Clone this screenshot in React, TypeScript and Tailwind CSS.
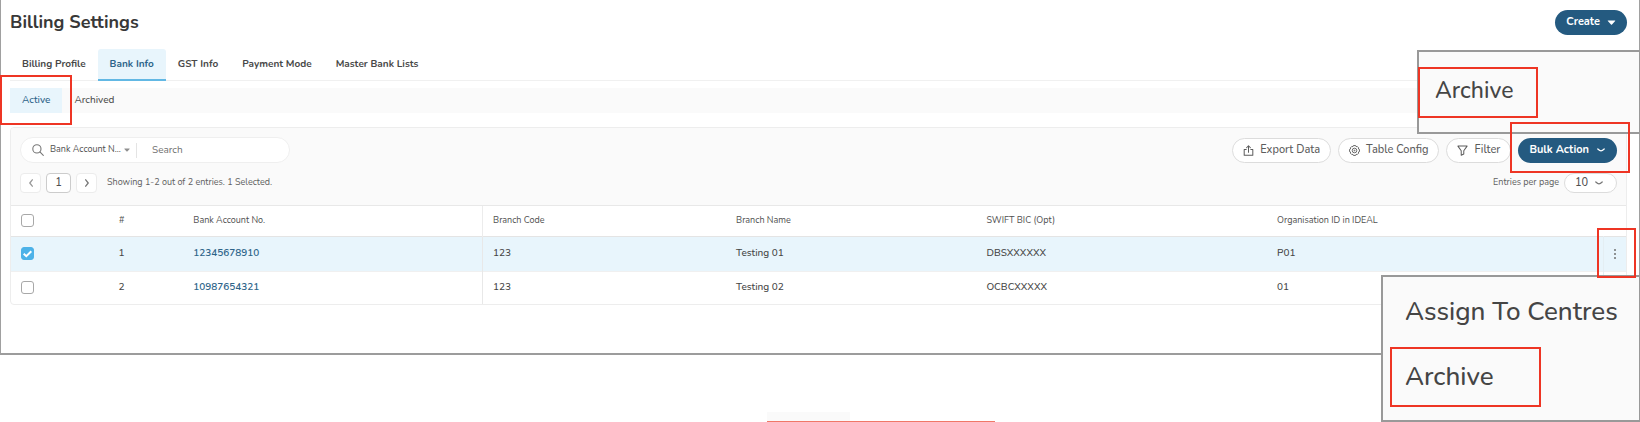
import type { ReactNode } from "react";

const tabs = ["Billing Profile", "Bank Info", "GST Info", "Payment Mode", "Master Bank Lists"];

const rows = [
  { id: 1, account: "12345678910", code: "123", name: "Testing 01", swift: "DBSXXXXXX", org: "P01", selected: true },
  { id: 2, account: "10987654321", code: "123", name: "Testing 02", swift: "OCBCXXXXX", org: "01", selected: false },
];

function Chevron({ className }: { className?: string }) {
  return (
    <svg viewBox="0 0 10 10" className={className} fill="none" stroke="currentColor" strokeWidth="1.3" strokeLinecap="round" strokeLinejoin="round" aria-hidden="true">
      <path d="M1.800 4C3 5.100 4 5.800 5 5.800S7 5.100 8.200 4" />
    </svg>
  );
}

function Caret({ className }: { className?: string }) {
  return (
    <svg viewBox="0 0 10 6" className={className} fill="currentColor" aria-hidden="true">
      <path d="M1 .5h8c.5 0 .7.5.4.8L5.6 5.300a.8.8 0 0 1-1.200 0L.6 1.300C.3 1 .5.500 1 .5Z" />
    </svg>
  );
}

function Angle({ back }: { back?: boolean }) {
  return (
    <svg viewBox="0 0 10 10" className="size-[10px]" fill="none" stroke="currentColor" strokeWidth="1.3" strokeLinecap="round" strokeLinejoin="round" aria-hidden="true">
      <path d={back ? "M6.300 1.800 3.800 5l2.500 3.200" : "M3.700 1.800 6.200 5 3.700 8.200"} />
    </svg>
  );
}

function PillButton({ icon, children }: { icon: ReactNode; children: ReactNode }) {
  return (
    <button type="button" className="flex h-[25px] items-center gap-[6px] rounded-full border border-[#dcdcdc] bg-white px-[10px] text-[11px] font-medium text-[#5c5c5c]">
      {icon}
      {children}
    </button>
  );
}

function Checkbox({ label, checked }: { label: string; checked?: boolean }) {
  return (
    <label className="relative block size-[13px]">
      <input
        type="checkbox"
        aria-label={label}
        defaultChecked={checked}
        className="peer block size-[13px] appearance-none rounded-[3px] border border-[#a8a8a8] bg-white checked:border-[#4db2e8] checked:bg-[#4db2e8]"
      />
      <svg viewBox="0 0 13 13" className="pointer-events-none absolute inset-0 hidden size-[13px] peer-checked:block" fill="none" stroke="white" strokeWidth="2" aria-hidden="true">
        <path d="m2.700 6.700 2.600 2.500 5-5" />
      </svg>
    </label>
  );
}

export default function App() {
  return (
    <div className="relative h-screen overflow-hidden bg-white font-['Nunito','Noto_Sans',sans-serif] text-[#404040]">
      <main className="border-x border-b-2 border-x-[#a0a0a0] border-b-[#9c9c9c] pr-[12px] pb-[48px] pl-[9px]">
        <header className="flex items-center justify-between pt-[10px]">
          <h1 className="text-[18px] leading-[25px] font-bold text-[#383838]">Billing Settings</h1>
          <button type="button" className="flex h-[25px] items-center gap-[7px] rounded-full bg-[#245a80] px-[11px] text-[11px] font-bold text-white">
            Create
            <Caret className="h-[5px] w-[9px]" />
          </button>
        </header>

        <nav className="mt-[14px] flex border-b border-[#f0f0f0]">
          {tabs.map((tab) => (
            <a
              key={tab}
              href="#"
              className={
                tab === "Bank Info"
                  ? "-mb-px rounded-t-[3px] border-b-2 border-[#62b8e4] bg-[#e8f5fc] px-[12px] text-[10px] leading-[30px] font-bold text-[#2d6489]"
                  : "px-[12px] text-[10px] leading-[31px] font-bold text-[#484848]"
              }
            >
              {tab}
            </a>
          ))}
        </nav>

        <nav className="mt-[7px] flex bg-[#fafafa] text-[10px] leading-[25px] font-medium">
          <a href="#" className="bg-[#e8f5fc] px-[12px] text-[#2d6489]">Active</a>
          <a href="#" className="px-[12px] text-[#505050]">Archived</a>
        </nav>

        <section className="mt-[14px] overflow-hidden rounded-[4px] border border-[#ededed]">
          <div className="border-b border-[#e8e8e8] bg-[#fafafa] px-[9px] pt-[9px] pb-[12px]">
            <div className="flex items-center justify-between">
              <div className="flex h-[26px] w-[270px] items-center rounded-full border border-[#efefef] bg-white pl-[11px]">
                <svg viewBox="0 0 12 12" className="size-[12px] text-[#777777]" fill="none" stroke="currentColor" strokeWidth="1.100" strokeLinecap="round" aria-hidden="true">
                  <circle cx="4.900" cy="4.900" r="4.100" />
                  <path d="m7.900 7.900 3.400 3.400" />
                </svg>
                <button type="button" className="ml-[6px] flex h-[15px] w-[87px] items-center justify-between border-r border-[#e4e4e4] pr-[6px] text-[9px] text-[#505050]">
                  Bank Account N...
                  <Caret className="h-[4px] w-[6px] text-[#909090]" />
                </button>
                <input type="text" aria-label="Search" placeholder="Search" className="ml-[15px] w-[110px] bg-transparent text-[10px] outline-none placeholder:text-[#707070]" />
              </div>
              <div className="flex gap-[7px]">
                <PillButton
                  icon={
                    <svg viewBox="0 0 12 12" className="size-[11px]" fill="none" stroke="currentColor" strokeWidth="1.100" strokeLinecap="round" strokeLinejoin="round" aria-hidden="true">
                      <path d="M3.500 5H1.300v6.300h9.400V5H8.500M6 8V1M3.900 3 6 .8 8.100 3" />
                    </svg>
                  }
                >
                  Export Data
                </PillButton>
                <PillButton
                  icon={
                    <svg viewBox="0 0 12 12" className="size-[11px]" fill="none" stroke="currentColor" strokeWidth="1" strokeLinejoin="round" aria-hidden="true">
                      <path d="M4.800.600h2.400l.5 1.200 1.300-.2 1.500 1.500-.2 1.300 1.200.5v2.200l-1.200.5.2 1.300-1.500 1.500-1.300-.2-.5 1.200H4.800l-.5-1.200-1.300.2-1.500-1.500.2-1.300-1.200-.5V4.900l1.200-.5-.2-1.300L3 1.600l1.300.2Z" />
                      <circle cx="6" cy="6" r="2.500" />
                      <circle cx="6" cy="6" r=".5" />
                    </svg>
                  }
                >
                  Table Config
                </PillButton>
                <PillButton
                  icon={
                    <svg viewBox="0 0 12 12" className="size-[11px]" fill="none" stroke="currentColor" strokeWidth="1.100" strokeLinejoin="round" aria-hidden="true">
                      <path d="M1 1.200h10L7.400 6.200v3.600l-2.800 1.400v-5Z" />
                    </svg>
                  }
                >
                  Filter
                </PillButton>
                <button type="button" className="flex h-[25px] items-center gap-[7px] rounded-full bg-[#245a80] px-[11px] text-[11px] font-bold text-white">
                  Bulk Action
                  <Chevron className="size-[10px]" />
                </button>
              </div>
            </div>
            <div className="mt-[10px] flex items-center justify-between text-[9px] text-[#606060]">
              <div className="flex items-center">
                <button type="button" aria-label="Previous page" className="flex h-[20px] w-[21px] items-center justify-center rounded-[4px] border border-[#ececec] bg-white text-[#999999]"><Angle back /></button>
                <button type="button" className="mx-[5px] h-[20px] w-[25px] rounded-[4px] border border-[#cccccc] bg-white text-[11px] font-medium text-[#505050]">1</button>
                <button type="button" aria-label="Next page" className="flex h-[20px] w-[21px] items-center justify-center rounded-[4px] border border-[#ececec] bg-white text-[#777777]"><Angle /></button>
                <span className="ml-[10px]">Showing 1-2 out of 2 entries. 1 Selected.</span>
              </div>
              <label className="flex items-center gap-[5px]">
                Entries per page
                <span className="relative block">
                  <select className="block h-[20px] w-[53px] appearance-none rounded-full border border-[#dcdcdc] bg-white pl-[10px] text-[11px] font-medium text-[#505050]">
                    <option>10</option>
                  </select>
                  <Chevron className="pointer-events-none absolute top-[5px] right-[13px] size-[10px] text-[#777777]" />
                </span>
              </label>
            </div>
          </div>

          <table className="w-full table-fixed text-left">
            <colgroup>
              <col className="w-[4.7%]" />
              <col className="w-[4.3%]" />
              <col className="w-[20.2%]" />
              <col className="w-[15.7%]" />
              <col className="w-[15.5%]" />
              <col className="w-[18%]" />
              <col />
              <col className="w-[23px]" />
            </colgroup>
            <thead>
              <tr className="h-[30px] border-b border-[#e4e4e4] text-[9px] text-[#505050]">
                <th className="pl-[10px]"><Checkbox label="Select all" /></th>
                <th className="text-center font-normal">#</th>
                <th className="pl-[37px] font-normal">Bank Account No.</th>
                <th className="border-l border-[#ececec] pl-[10px] font-normal">Branch Code</th>
                <th className="font-normal">Branch Name</th>
                <th className="font-normal">SWIFT BIC (Opt)</th>
                <th className="font-normal">Organisation ID in IDEAL</th>
                <th aria-label="Actions" />
              </tr>
            </thead>
            <tbody className="text-[10px] font-medium text-[#454545]">
              {rows.map((row) => (
                <tr key={row.id} className={row.selected ? "h-[35px] border-b border-[#f0f0f0] bg-[#e8f5fc]" : "h-[33px]"}>
                  <td className="pl-[10px]"><Checkbox label={`Select ${row.account}`} checked={row.selected} /></td>
                  <td className="text-center">{row.id}</td>
                  <td className="pl-[37px] font-semibold text-[#2d6489]"><a href="#">{row.account}</a></td>
                  <td className="border-l border-[#e8e8e8] pl-[10px]">{row.code}</td>
                  <td>{row.name}</td>
                  <td>{row.swift}</td>
                  <td>{row.org}</td>
                  <td className="border-l border-[#e4eef3]">
                    <button type="button" aria-label="Row actions" className="mx-auto flex flex-col gap-[2px]">
                      <span className="size-[2px] rounded-full bg-[#707070]" />
                      <span className="size-[2px] rounded-full bg-[#707070]" />
                      <span className="size-[2px] rounded-full bg-[#707070]" />
                    </button>
                  </td>
                </tr>
              ))}
            </tbody>
          </table>
        </section>
      </main>

      {/* Enlarged menus */}
      <div className="absolute top-[50px] right-0 h-[84px] w-[223px] border-2 border-r border-[#999999] bg-[#fafafa] pt-[24px] pl-[16px]">
        <button type="button" className="text-[23px] leading-[30px] font-medium text-[#454545]">Archive</button>
      </div>
      <div className="absolute top-[275px] right-0 flex h-[147px] w-[259px] flex-col items-start gap-[31px] border-2 border-r border-[#999999] bg-[#fafafa] pt-[18px] pl-[22px] text-[26px] leading-[34px] text-[#454545]">
        <button type="button" className="font-medium whitespace-nowrap">Assign To Centres</button>
        <button type="button" className="font-medium">Archive</button>
      </div>

      {/* Highlight boxes */}
      <div className="pointer-events-none absolute top-[75px] left-0 h-[50px] w-[72px] border-2 border-[#ee3524]" />
      <div className="pointer-events-none absolute top-[67px] right-[102px] h-[51px] w-[120px] border-2 border-[#ee3524]" />
      <div className="pointer-events-none absolute top-[122px] right-[10px] h-[51px] w-[120px] border-2 border-[#ee3524]" />
      <div className="pointer-events-none absolute top-[228px] right-[4px] h-[50px] w-[39px] border-2 border-[#ee3524]" />
      <div className="pointer-events-none absolute top-[347px] right-[99px] h-[60px] w-[151px] border-2 border-[#ee3524]" />
      <div className="absolute top-[412px] left-[767px] h-[30px] w-[83px] bg-[#fafafa]" />
      <div className="pointer-events-none absolute top-[421px] left-[767px] h-[30px] w-[228px] border-2 border-[#f07868]" />
    </div>
  );
}
